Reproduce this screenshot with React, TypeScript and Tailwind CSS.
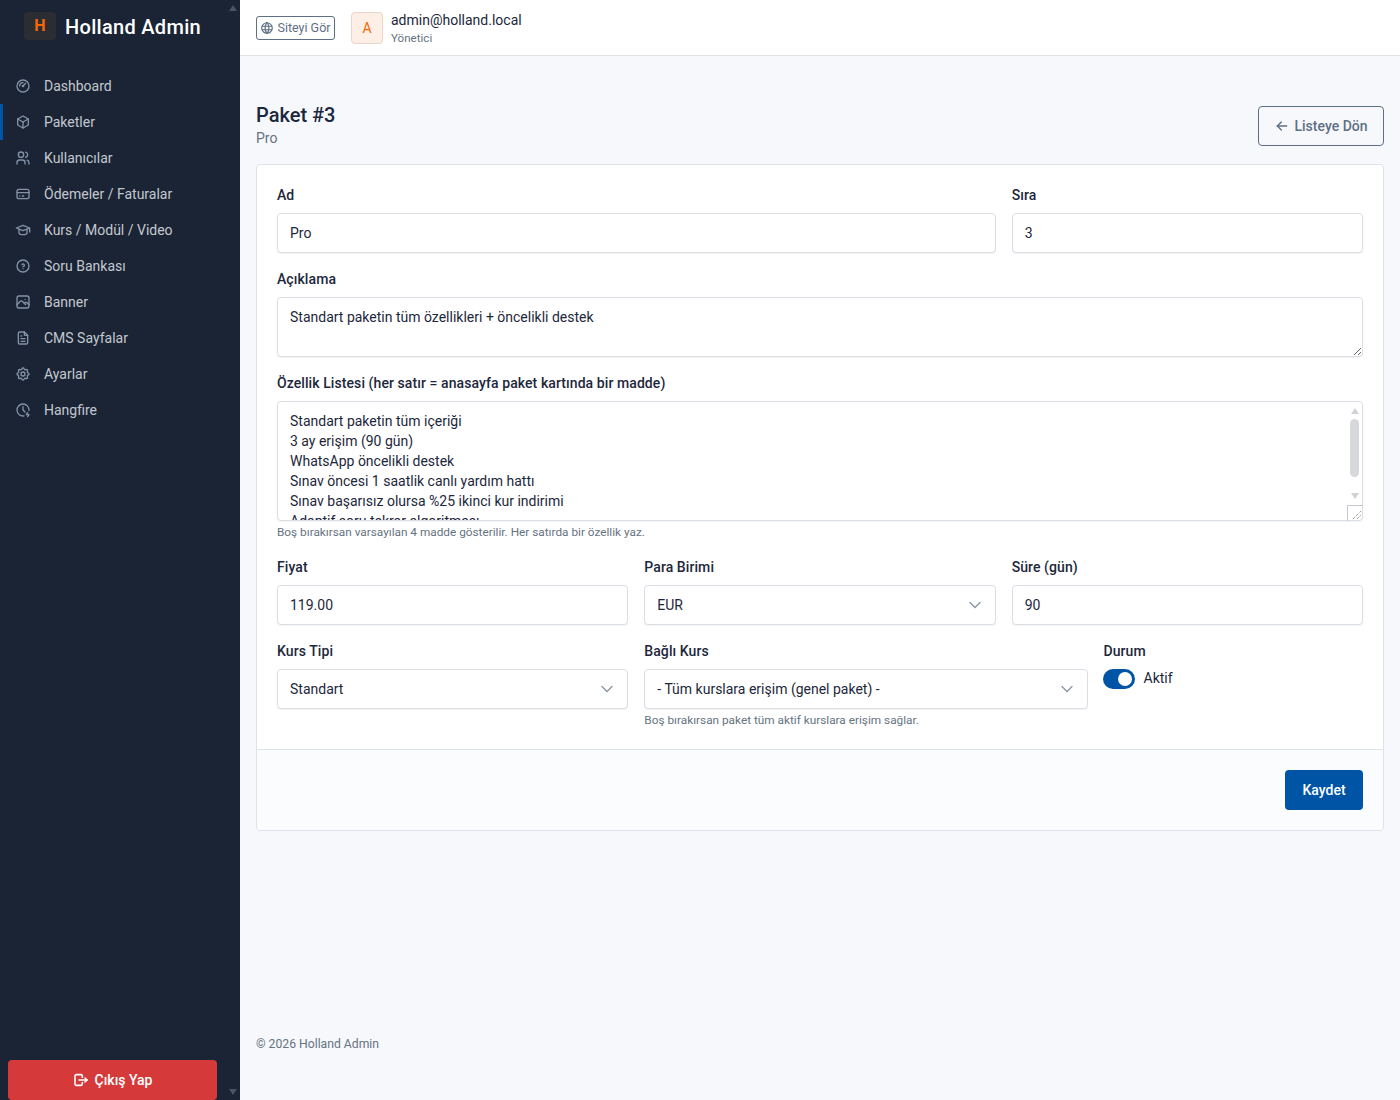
import { ReactNode } from 'react'
import {
  TbArrowLeft,
  TbBox,
  TbClockBolt,
  TbCreditCard,
  TbFileText,
  TbGauge,
  TbHelpCircle,
  TbLogout,
  TbPhoto,
  TbSchool,
  TbSettings,
  TbUsers,
  TbWorld,
} from 'react-icons/tb'

const font = { fontFamily: 'Roboto, "Noto Sans", sans-serif' }

const navItems = [
  { label: 'Dashboard', icon: TbGauge },
  { label: 'Paketler', icon: TbBox, active: true },
  { label: 'Kullanıcılar', icon: TbUsers },
  { label: 'Ödemeler / Faturalar', icon: TbCreditCard },
  { label: 'Kurs / Modül / Video', icon: TbSchool },
  { label: 'Soru Bankası', icon: TbHelpCircle },
  { label: 'Banner', icon: TbPhoto },
  { label: 'CMS Sayfalar', icon: TbFileText },
  { label: 'Ayarlar', icon: TbSettings },
  { label: 'Hangfire', icon: TbClockBolt },
]

const features = `Standart paketin tüm içeriği
3 ay erişim (90 gün)
WhatsApp öncelikli destek
Sınav öncesi 1 saatlik canlı yardım hattı
Sınav başarısız olursa %25 ikinci kur indirimi
Adaptif soru tekrar algoritması`

function Label({ children }: { children: ReactNode }) {
  return <div className="mb-2 text-[14px] leading-[20px] font-medium tracking-[0.08px] text-[#1d273b]">{children}</div>
}

function TextField({ value }: { value: string }) {
  return (
    <input
      readOnly
      value={value}
      className="block h-10 w-full rounded border border-[#dadfe5] bg-white px-3 text-[14px] text-[#1d273b] shadow-[0_1px_1px_rgba(0,0,0,0.05)] outline-none"
    />
  )
}

function SelectField({ value }: { value: string }) {
  return (
    <div className="flex h-10 w-full items-center justify-between rounded border border-[#dadfe5] bg-white px-3 text-[14px] text-[#1d273b] shadow-[0_1px_1px_rgba(0,0,0,0.05)]">
      <span>{value}</span>
      <svg width="16" height="16" viewBox="0 0 16 16" fill="none" stroke="#8a94a3" strokeWidth="1.3" strokeLinecap="round">
        <path d="M3 5.5l5 5 5-5" />
      </svg>
    </div>
  )
}

function Hint({ children }: { children: ReactNode }) {
  return <div className="mt-[3px] text-[11.8px] leading-[17px] text-[#667382]">{children}</div>
}

function ScrollArrow({ up, className }: { up?: boolean; className: string }) {
  return (
    <svg width="8" height="6" viewBox="0 0 10 6" preserveAspectRatio="none" className={className}>
      <path d={up ? 'M5 0 L10 6 L0 6 Z' : 'M0 0 L10 0 L5 6 Z'} fill="currentColor" />
    </svg>
  )
}

function Sidebar() {
  return (
    <aside className="relative flex h-[1100px] w-[240px] shrink-0 flex-col bg-[#1a2435]">
      <ScrollArrow up className="absolute top-[5px] right-[3px] text-[#4a5361]" />
      <ScrollArrow className="absolute right-[3px] bottom-[5px] text-[#4a5361]" />
      <div className="flex h-[56px] items-start pt-3 pl-6">
        <div className="flex h-7 w-8 items-center justify-center rounded bg-[#2b2d33] text-[16px] font-bold text-[#f76707]">
          H
        </div>
        <div className="ml-[9px] text-[20px] leading-[30px] font-medium tracking-[0.3px] text-white">Holland Admin</div>
      </div>
      <nav className="mt-3 flex flex-col">
        {navItems.map(item => (
          <div
            key={item.label}
            className={`flex h-9 items-center border-l-[3px] pl-3 text-[14px] text-[#c3c8cf] ${
              item.active ? 'border-[#0054a6]' : 'border-transparent'
            }`}
          >
            <item.icon size={16} className="mr-[13px] text-[#8493a8]" />
            {item.label}
          </div>
        ))}
      </nav>
      <div className="mt-auto pr-[23px] pl-2">
        <button className="flex h-10 w-full items-center justify-center gap-[6px] rounded bg-[#d63939] text-[14px] font-medium text-white">
          <TbLogout size={16} strokeWidth={2.4} />
          Çıkış Yap
        </button>
      </div>
    </aside>
  )
}

function Topbar() {
  return (
    <header className="flex h-[56px] items-center border-b border-[#dfe1e5] bg-white pl-4">
      <button className="flex h-6 w-[79px] items-center justify-center gap-[3px] rounded-[3px] border border-[#5f6f84] pt-px text-[12.5px] text-[#5f6f84]">
        <TbWorld size={14} className="-mt-px" />
        Siteyi Gör
      </button>
      <div className="ml-4 flex h-8 w-8 items-center justify-center rounded border border-[#e8d5cc] bg-[#fdeee6] pt-px text-[14px] text-[#f76707]">
        A
      </div>
      <div className="ml-2">
        <div className="text-[14px] leading-[20px] text-[#1d273b]">admin@holland.local</div>
        <div className="text-[11.6px] leading-[16px] text-[#667382]">Yönetici</div>
      </div>
    </header>
  )
}

function PackageForm() {
  return (
    <div className="rounded border border-[#dfe3e9] bg-white">
      <div className="px-5 pt-5 pb-5">
        <div className="grid grid-cols-12 gap-x-4">
          <div className="col-span-8">
            <Label>Ad</Label>
            <TextField value="Pro" />
          </div>
          <div className="col-span-4">
            <Label>Sıra</Label>
            <TextField value="3" />
          </div>

          <div className="col-span-12 mt-4">
            <Label>Açıklama</Label>
            <textarea
              readOnly
              value="Standart paketin tüm özellikleri + öncelikli destek"
              className="block h-[60px] w-full rounded border border-[#dadfe5] bg-white px-3 py-[9px] text-[14px] leading-[20px] text-[#1d273b] shadow-[0_1px_1px_rgba(0,0,0,0.05)] outline-none"
            />
          </div>

          <div className="col-span-12 mt-4">
            <Label>Özellik Listesi (her satır = anasayfa paket kartında bir madde)</Label>
            <div className="relative">
              <textarea
                readOnly
                value={features}
                className="block h-[120px] w-full resize-none overflow-hidden rounded border border-[#dadfe5] bg-white px-3 py-[9px] text-[14px] leading-[20px] text-[#1d273b] shadow-[0_1px_1px_rgba(0,0,0,0.05)] outline-none"
              />
              <ScrollArrow up className="absolute top-[7px] right-1 text-[#cfd2d6]" />
              <div className="absolute top-[18px] right-1 h-[58px] w-[9px] rounded-full bg-[#d6d8db]" />
              <ScrollArrow className="absolute right-1 bottom-[22px] text-[#cfd2d6]" />
              <svg width="16" height="16" viewBox="0 0 16 16" className="absolute right-0 bottom-0">
                <path d="M0.5 16 V0.5 H16" fill="white" stroke="#c4c7cb" />
                <path d="M6 14 L14 6 M10 14 L14 10" stroke="#777" strokeDasharray="1 1" fill="none" />
              </svg>
            </div>
            <Hint>Boş bırakırsan varsayılan 4 madde gösterilir. Her satırda bir özellik yaz.</Hint>
          </div>

          <div className="col-span-4 mt-4">
            <Label>Fiyat</Label>
            <TextField value="119.00" />
          </div>
          <div className="col-span-4 mt-4">
            <Label>Para Birimi</Label>
            <SelectField value="EUR" />
          </div>
          <div className="col-span-4 mt-4">
            <Label>Süre (gün)</Label>
            <TextField value="90" />
          </div>

          <div className="col-span-4 mt-4">
            <Label>Kurs Tipi</Label>
            <SelectField value="Standart" />
          </div>
          <div className="col-span-5 mt-4">
            <Label>Bağlı Kurs</Label>
            <SelectField value="- Tüm kurslara erişim (genel paket) -" />
            <Hint>Boş bırakırsan paket tüm aktif kurslara erişim sağlar.</Hint>
          </div>
          <div className="col-span-3 mt-4">
            <Label>Durum</Label>
            <div className="-mt-px -ml-px flex items-center text-[14px] text-[#1d273b]">
              <div className="flex h-5 w-8 items-center justify-end rounded-full bg-[#0054a6] pr-[3px]">
                <div className="h-[14px] w-[14px] rounded-full bg-white" />
              </div>
              <span className="ml-[9px]">Aktif</span>
            </div>
          </div>
        </div>
      </div>
      <div className="flex justify-end rounded-b border-t border-[#dfe3e9] bg-[#fbfcfe] p-5">
        <button className="h-10 w-[78px] rounded bg-[#0054a6] text-[14px] font-medium text-white">Kaydet</button>
      </div>
    </div>
  )
}

export default function App() {
  return (
    <div className="flex min-h-[1100px] bg-[#f6f8fb]" style={font}>
      <Sidebar />
      <div className="flex min-w-0 flex-1 flex-col">
        <Topbar />
        <main className="flex flex-1 flex-col px-4 pt-[50px]">
          <div className="mb-[18px] flex items-start justify-between">
            <div className="-mt-1 -mb-0.5">
              <h1 className="text-[20px] leading-[26px] font-medium text-[#1d273b]">Paket #3</h1>
              <div className="text-[14px] leading-[20px] text-[#667382]">Pro</div>
            </div>
            <button className="flex h-10 w-[126px] items-center justify-center gap-1 rounded border border-[#5f6f84] text-[14px] font-medium text-[#5f6f84]">
              <TbArrowLeft size={16} />
              Listeye Dön
            </button>
          </div>
          <PackageForm />
          <footer className="mt-auto pb-[48px] text-[12.2px] leading-[16px] text-[#667382]">© 2026 Holland Admin</footer>
        </main>
      </div>
    </div>
  )
}
